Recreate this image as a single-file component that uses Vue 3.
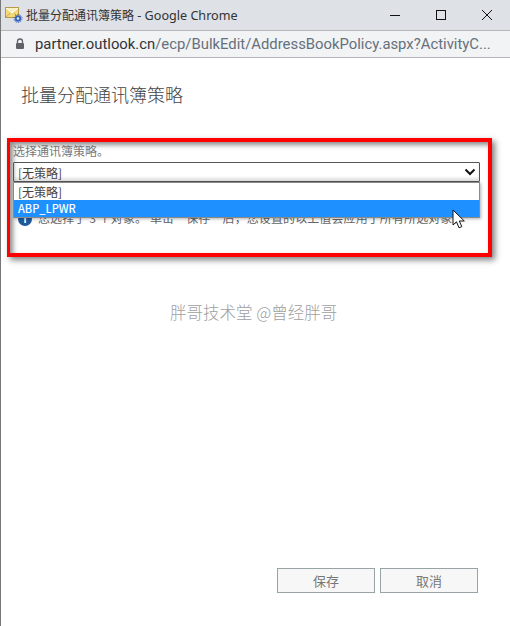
<script setup>
</script>

<template>
  <div class="win">
    <i class="edge"></i>
    <header class="titlebar">
      <svg class="appicon" width="18" height="16" viewBox="0 0 18 16">
        <rect x="0.5" y="0.5" width="13" height="10" fill="#f4d978" stroke="#b39a4a"/>
        <path d="M1 1l6 5 6-5" fill="#fbf0c0" stroke="#fff" stroke-width="1"/>
        <path d="M1 10l4.500-4M13 10L9 6" fill="none" stroke="#c9a94e"/>
        <circle cx="13" cy="11.500" r="3.200" fill="#3a66b8"/>
        <circle cx="13" cy="11.500" r="4" fill="none" stroke="#3a66b8" stroke-width="1" stroke-dasharray="1.300 1.200"/>
        <circle cx="13" cy="11.500" r="1.200" fill="#dfe8f7"/>
      </svg>
      <span class="title"><span class="cjk">批量分配通讯簿策略</span> - Google Chrome</span>
      <div class="controls">
        <svg width="12" height="12" viewBox="0 0 12 12"><path d="M1 6.500h10" stroke="#111" fill="none"/></svg>
        <svg width="12" height="12" viewBox="0 0 12 12"><rect x="1.500" y="1.500" width="9" height="9" stroke="#111" fill="none"/></svg>
        <svg width="12" height="12" viewBox="0 0 12 12"><path d="M1 1l10 10M11 1L1 11" stroke="#111" fill="none"/></svg>
      </div>
    </header>
    <div class="addr">
      <svg width="10" height="12" viewBox="0 0 10 12"><path d="M2.500 5V3.500a2.500 2.500 0 0 1 5 0V5" fill="none" stroke="#5f6368" stroke-width="1.300"/><rect x="1" y="5" width="8" height="6" rx="1" fill="#5f6368"/></svg>
      <span class="url"><b>partner.outlook.cn</b>/ecp/BulkEdit/AddressBookPolicy.aspx?ActivityC...</span>
    </div>
    <main class="page">
      <h1>批量分配通讯簿策略</h1>
      <section class="callout">
        <label>选择通讯簿策略。</label>
        <div class="select">
          <span>[无策略]</span>
          <svg width="12" height="8" viewBox="0 0 12 8"><path d="M1.500 1.500L6 6l4.500-4.500" fill="none" stroke="#111" stroke-width="2"/></svg>
        </div>
        <div class="info">
          <span class="i">i</span>
          <span>您选择了 3 个对象。 单击“保存”后，您设置的以上值会应用于所有所选对象。</span>
        </div>
        <ul class="menu">
          <li>[无策略]</li>
          <li class="on">ABP_LPWR</li>
        </ul>
        <svg class="cursor" width="14" height="20" viewBox="0 0 14 20"><path d="M1 1v15l3.500-3.200 2.500 6 2.800-1.200-2.500-5.600h5z" fill="#fff" stroke="#111" stroke-width="1"/></svg>
      </section>
      <div class="mark">胖哥技术堂 @曾经胖哥</div>
      <div class="actions">
        <button>保存</button>
        <button>取消</button>
      </div>
    </main>
  </div>
</template>

<style>
html, body { margin: 0; background: #fff; }
</style>

<style scoped>
.win { position: relative; width: 510px; height: 626px; box-sizing: border-box; border-left: 1px solid #777; display: flex; flex-direction: column; overflow: hidden; font-family: "Noto Sans CJK SC", sans-serif; }
.edge { position: absolute; left: -1px; top: 233px; width: 1px; height: 62px; background: #444; }
.titlebar { height: 30px; background: #dee1e6; border-bottom: 1px solid #b4b6b9; display: flex; align-items: center; padding-left: 4px; }
.appicon { margin-right: 3px; }
.title { font: 12.600px/30px "Noto Sans", sans-serif; color: #333; white-space: nowrap; }
.cjk { font: 12px/30px "Noto Sans CJK SC", sans-serif; }
.controls { margin-left: auto; display: flex; gap: 34px; padding-right: 17px; }
.addr { height: 26px; background: #f1f3f4; border-bottom: 1px solid #b4b6b9; display: flex; align-items: center; padding-left: 14px; gap: 10px; }
.url { font: 14.850px "Roboto", sans-serif; color: #66707c; white-space: nowrap; }
.url b { font-weight: 400; color: #30343a; }
.page { flex: 1; position: relative; display: flex; flex-direction: column; padding-left: 20px; }
h1 { margin: 24px 0 0; font: 300 18px/24px "Noto Sans CJK SC", sans-serif; color: #444; }
.callout { position: relative; margin: 32px 0 0 -14px; width: 485px; height: 119px; box-sizing: border-box; border: 4px solid #f00; border-left-width: 3px; box-shadow: 3px 3px 6px rgba(0,0,0,.5), inset 3px 3px 5px rgba(0,0,0,.45); padding: 1px 0 0 3px; }
label { display: block; font-size: 12px; line-height: 16px; color: #777; }
.select { margin-top: 3px; width: 467px; height: 20px; box-sizing: border-box; border: 1px solid #555; border-radius: 1px; box-shadow: inset 0 -3px 3px rgba(0,0,0,.12); display: flex; align-items: center; justify-content: space-between; padding: 0 3px 0 4px; font-size: 12px; color: #444; }
.info { margin-top: 28px; padding-left: 5px; display: flex; align-items: center; gap: 6px; font-size: 12px; line-height: 16px; letter-spacing: .1px; color: #666; white-space: nowrap; }
.i { width: 14px; height: 14px; margin-top: 2px; border-radius: 50%; background: #1f5a9e; color: #fff; font: 700 11px/14px "Liberation Sans", sans-serif; text-align: center; }
.menu { position: absolute; left: 3px; top: 40px; width: 467px; margin: 0; padding: 0; list-style: none; box-sizing: border-box; border: 1px solid #8a8a8a; background: #fff; font-size: 12px; box-shadow: 1px 1px 3px rgba(0,0,0,.3); }
.menu li { height: 17px; line-height: 17px; padding-left: 4px; color: #444; }
.menu li.on { background: #1e90ff; color: #fff; font-size: 11px; font-weight: 500; }
.cursor { position: absolute; left: 442px; top: 67px; }
.mark { margin: 43px 0 0 149px; font-size: 16.500px; font-weight: 300; line-height: 24px; color: #a0a0a0; }
.actions { position: absolute; right: 32px; bottom: 33px; display: flex; gap: 5px; }
button { width: 98px; height: 25px; background: #f7f7f7; border: 1px solid #97a3a5; font: 13px "Noto Sans CJK SC", sans-serif; color: #777; padding: 0; }
</style>
